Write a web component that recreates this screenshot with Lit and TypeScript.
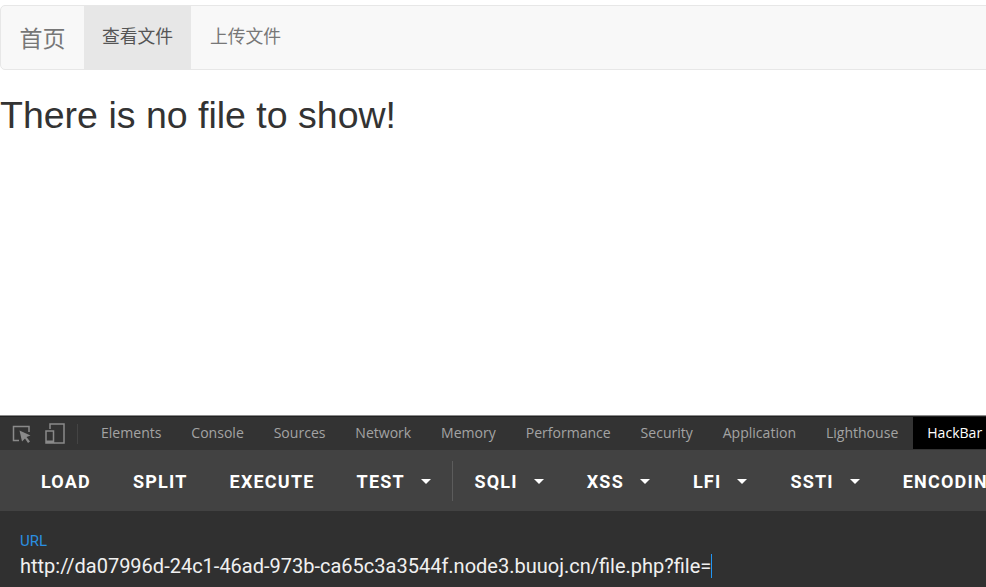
import { LitElement, html, css } from 'lit';
import { customElement } from 'lit/decorators.js';

@customElement('app-root')
export class AppRoot extends LitElement {
  static styles = css`
    :host {
      display: block;
      width: 986px;
      height: 587px;
      overflow: hidden;
      background: #fff;
    }
    .page {
      height: 587px;
      display: flex;
      flex-direction: column;
    }
    .top {
      flex: 1;
      padding-top: 5px;
      font-family: "Liberation Sans", "Noto Sans CJK SC", sans-serif;
    }
    .navbar {
      display: flex;
      width: 1000px;
      height: 65px;
      box-sizing: border-box;
      background: #f8f8f8;
      border: 1px solid #e7e7e7;
      border-radius: 5px;
    }
    .brand {
      width: 83px;
      padding-bottom: 2px;
      box-sizing: border-box;
      display: flex;
      align-items: center;
      justify-content: center;
      font-size: 23px;
      color: #777;
    }
    .tab {
      width: 107px;
      padding-bottom: 5px;
      box-sizing: border-box;
      display: flex;
      align-items: center;
      justify-content: center;
      font-size: 17.8px;
      color: #777;
    }
    .tab.active {
      background: #e7e7e7;
      color: #555;
    }
    .tab.upload {
      padding-left: 2px;
    }
    h2 {
      margin: 24px 0 0;
      font-size: 37.5px;
      line-height: 42px;
      font-weight: 400;
      color: #333;
    }
    .devtools {
      height: 172px;
      flex: none;
      background: #303030;
      box-sizing: border-box;
    }
    .tabs {
      height: 35px;
      padding-top: 1px;
      box-sizing: border-box;
      display: flex;
      background: #333;
      border-top: 1px solid #8b8b8b;
      box-shadow: inset 0 1px 0 #222;
      font-family: "Open Sans", sans-serif;
      font-size: 14.05px;
      color: #a3a3a3;
      white-space: nowrap;
    }
    .tools {
      display: flex;
      align-items: center;
      gap: 12px;
      padding-left: 12px;
      flex: none;
    }
    .sep {
      width: 1px;
      height: 20px;
      background: #444;
    }
    .names {
      display: flex;
      align-items: center;
      flex: none;
      padding: 0 0 2px 23px;
      gap: 29.85px;
    }
    .hackbar {
      display: flex;
      align-items: center;
      flex: none;
      box-sizing: border-box;
      background: #000;
      color: #fff;
      height: 32px;
      padding: 0 14px 2px;
      margin-left: 15px;
    }
    .bar {
      height: 61px;
      display: flex;
      align-items: center;
      background: #424242;
      padding-left: 41px;
      font-family: Roboto, sans-serif;
      font-size: 18px;
      font-weight: 700;
      letter-spacing: 1.2px;
      color: #fff;
      white-space: nowrap;
    }
    .btn {
      display: flex;
      align-items: center;
      flex: none;
      margin-right: 42px;
      padding-top: 1px;
    }
    .btn.menu {
      margin-right: 43px;
    }
    .caret {
      width: 0;
      height: 0;
      margin-left: 16px;
      border-left: 5px solid transparent;
      border-right: 5px solid transparent;
      border-top: 5px solid #fff;
    }
    .divider {
      width: 1px;
      height: 40px;
      flex: none;
      background: #5c5c5c;
      margin: 0 21.5px 0 -22px;
    }
    .url {
      padding: 22px 20px 0;
      font-family: Roboto, sans-serif;
    }
    .label {
      font-size: 15px;
      line-height: 16px;
      color: #2a8fe0;
    }
    .value {
      display: flex;
      margin-top: 3px;
      font-size: 20px;
      line-height: 28px;
      color: #f0f0f0;
      white-space: nowrap;
    }
    .cursor {
      width: 1px;
      height: 24px;
      margin-top: 2px;
      background: #2196f3;
    }
  `;

  render() {
    const names = ['Elements', 'Console', 'Sources', 'Network', 'Memory', 'Performance', 'Security', 'Application', 'Lighthouse'];
    const left = ['LOAD', 'SPLIT', 'EXECUTE'];
    const menus = ['SQLI', 'XSS', 'LFI', 'SSTI'];
    return html`
      <div class="page">
        <div class="top">
          <nav class="navbar">
            <div class="brand">首页</div>
            <div class="tab active">查看文件</div>
            <div class="tab upload">上传文件</div>
          </nav>
          <h2>There is no file to show!</h2>
        </div>
        <div class="devtools">
          <div class="tabs">
            <div class="tools">
              <svg width="20" height="20" viewBox="0 0 20 20" fill="none">
                <path d="M7 16.5H1.5V2.5H17V8" stroke="#8a8a8a" stroke-width="1.5"/>
                <path d="M7.5 6.5L18.5 11.5L14.5 13L18 17.5L16 19L13 14.5L10 17.5Z" fill="#8a8a8a"/>
              </svg>
              <svg width="20" height="22" viewBox="0 0 20 22" fill="none" style="margin-left:1px">
                <path d="M5 6V1H19V20H9" stroke="#8a8a8a" stroke-width="1.5"/>
                <rect x="1" y="8" width="7.5" height="12" stroke="#8a8a8a" stroke-width="1.5"/>
                <path d="M1 17.5H8.5V20H1Z" fill="#8a8a8a"/>
              </svg>
              <div class="sep"></div>
            </div>
            <div class="names">${names.map((n) => html`<span>${n}</span>`)}</div>
            <div class="hackbar">HackBar</div>
          </div>
          <div class="bar">
            ${left.map((b) => html`<div class="btn">${b}</div>`)}
            <div class="btn menu">TEST<span class="caret"></span></div>
            <div class="divider"></div>
            ${menus.map((b) => html`<div class="btn menu">${b}<span class="caret"></span></div>`)}
            <div class="btn">ENCODING</div>
          </div>
          <div class="url">
            <div class="label">URL</div>
            <div class="value">http://da07996d-24c1-46ad-973b-ca65c3a3544f.node3.buuoj.cn/file.php?file=<span class="cursor"></span></div>
          </div>
        </div>
      </div>
    `;
  }
}
